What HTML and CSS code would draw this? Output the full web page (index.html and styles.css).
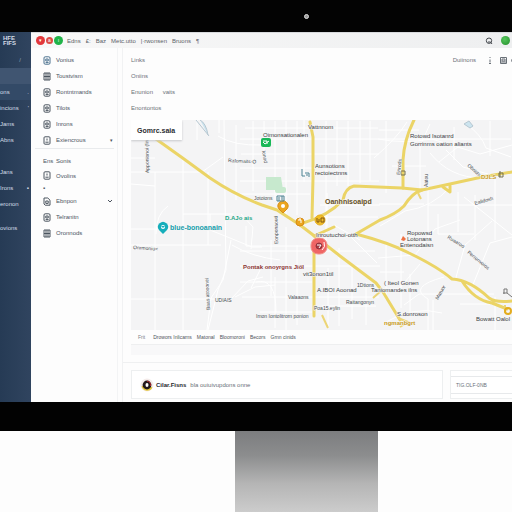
FILE: index.html
```html
<!DOCTYPE html>
<html lang="en">
<head>
<meta charset="utf-8">
<title>Map dashboard</title>
<link rel="stylesheet" href="styles.css">
</head>
<body>
<svg class="defs" aria-hidden="true">
  <symbol id="doc" viewBox="0 0 8 9"><rect x="1" y=".8" width="6" height="7.4" rx="1.2"/><path d="M2.8 3h2.4v2H2.8zM2.6 6.6h3"/></symbol>
  <symbol id="person" viewBox="0 0 8 9"><rect x="1" y=".8" width="6" height="7.4" rx="1"/><path d="M4 2.5v2M2.4 6.2h3.2"/></symbol>
  <symbol id="note" viewBox="0 0 8 9"><path d="M1 1h3.8L7 3.2v5H2.2L1 7zM2.8 4h2.4v2.4H2.8z"/></symbol>
  <symbol id="grid" viewBox="0 0 8 9"><path d="M1 1h6v7H1zM1 4.5h6M3 1v7M5 1v7"/></symbol>
</svg>
<div class="monitor">
  <div class="bezel-top"><span class="camera"></span></div>
  <div class="screen">
    <nav class="rail">
      <div class="logo">HFE<br>FIFS</div>
      <div class="rail-search"><span>/</span></div>
      <a class="lit" href="#">ons<i>.</i></a>
      <a href="#">incions<i>'</i></a>
      <a href="#">Jams</a>
      <a href="#">Abns</a>
      <a class="spaced" href="#">Jans</a>
      <a href="#">Irons<i>▪</i></a>
      <a href="#">eronon</a>
      <a class="late" href="#">ovions</a>
    </nav>
    <div class="window">
      <header class="toolbar">
        <span class="dot red">▾</span><span class="dot red small">a</span><span class="dot green">ı</span>
        <div class="menus"><a href="#">Edns</a><a href="#">£:</a><a href="#">Baz</a><a href="#">Metc.utto</a><a href="#">|·rwonsen</a><a href="#">Bruons</a><a href="#">¶</a></div>
        <button class="search" aria-label="Search"><svg viewBox="0 0 8 8"><circle cx="4" cy="3.7" r="2.7"/><path d="M3 5h2.5L7 7"/></svg></button>
        <span class="dot leaf"></span>
      </header>
      <div class="content">
        <aside class="side">
          <div class="group">
            <a href="#"><svg class="blue"><use href="#doc"/></svg>Vonius</a>
            <a href="#"><svg><use href="#grid"/></svg>Toustvism</a>
            <a href="#"><svg><use href="#doc"/></svg>Rontntmands</a>
            <a href="#"><svg><use href="#doc"/></svg>Tilots</a>
            <a href="#"><svg><use href="#doc"/></svg>Inrons</a>
            <a href="#"><svg><use href="#person"/></svg>Exiencrous<b class="filled">▾</b></a>
          </div>
          <div class="group tight">
            <a href="#"><em>Ens</em>Sonis</a>
            <a href="#"><svg><use href="#person"/></svg>Ovolins</a>
            <span class="bullet">▪</span>
          </div>
          <div class="group last">
            <a href="#"><svg><use href="#note"/></svg>Ebnpon<b><svg viewBox="0 0 6 4"><path d="M1 1l2 2 2-2"/></svg></b></a>
            <a href="#"><svg><use href="#doc"/></svg>Telranitn</a>
            <a href="#"><svg><use href="#grid"/></svg>Oronnods</a>
          </div>
        </aside>
        <main>
          <section class="page">
            <div class="heading">
              <div class="crumbs"><p>Links</p><p>Oniins</p><p>Enunion <span>vaits</span></p><p>Enontontos</p></div>
              <div class="actions"><span>Duiinons</span><svg viewBox="0 0 24 9"><path d="M2 1v1M2 3.5v3M1 7.5h2M12.5 1.5h6v6h-6zM14 3h3v2h-3zM13 6h5M25 1.5q-3 3 0 6"/></svg></div>
            </div>
            <div class="map">
              <div class="map-title">Gomrc.saia</div>
              <svg viewBox="131 120 381 210" role="img" aria-label="City map">
                <g class="street">
                  <path d="M131 158h24M131 172h71l21-15M131 184l24 2M155 172v158M183 158v172M208 172v73M236 125v75M131 229h52M131 245h90M131 299h100l17-18 15-4M210 214v16l20 8 22 9h10M218 136q16 10 44 9M224 120l2 150-8 20-10 40M231 240l-8 40-12 18-4 32M232 245q20 12 48 15M260 270l-9 18M256 282q20-5 20 30M183 214h50M168 206q-12 8-12 28"/>
                  <path d="M241 154h138M240 139h271M245 128h133M240 168h75M240 181h139M240 194h70M253 121v70M264 121v35M275 121v80M286 121v94M297 121v94M326 121v120M337 121v65M348 121v65M360 121v62M370 121v60M320 205h60M321 217h57M327 193v34M246 226v20h75M240 251h135M240 266h140M240 282h72M242 297h137M271 240v56M286 227v103M297 245v80M328 268v60M339 248v78M352 265v54M366 282v43M322 306h54M260 312h52M275 277v51"/>
                  <path d="M378 139q25 5 54 0l48 15 32-9M374 158q23-20 33-36M386 121v72M430 124l-10 22v44M430 153q20 25 52 25M446 150l17 17 25 7M428 176v65M450 187q-17 20-45 24l-25 15M466 124q15 10 20 24l25 9M464 197l48 38M458 192v40M475 195v45M495 178v62M379 204h45M428 205h84M378 258l37-3 20-26 25-9M420 264l-21 25h-24M444 277q-37 10-16 22v31M455 281l10-36 27-24M472 287l18-44 22-6M404 305l15-11h75M433 300v30M410 274v40M495 297v33M384 323q30-18 58-10"/>
                  <path d="M379 130h40M454 127v33M490 121v35M392 166h34M439 162l20-16M438 214v20h36M386 242v57M401 234v74M380 272h24M460 304h30M334 225l26 15M351 237l26 26M235 297l20-10 20-2M241 214l12 13-2 22M197 120v20M219 120v13M304 120v62"/>
                </g>
                <g class="green-area"><path d="M266 177h15l2 13h-17z"/><rect x="275" y="187" width="11" height="6" rx="2"/></g>
                <path class="water" d="M196 120l13 16M200 120q6 3 8 15M464 124l5-3 4 5-3 2z"/>
                <g class="main-road">
                  <path d="M156 139L184 159L210 178Q235 195 262 205L277 210L300 225Q320 240 340 256L376 283L383 292L400 320"/>
                  <path d="M310 122L313 137V178L312 218M314 250V316"/>
                  <path d="M343 200Q345 188 354 186L402 188L422 190L450 184L482 177L512 172M303 223Q328 216 343 200"/>
                  <path d="M414 120Q404 140 403 160V188M422 190Q412 193 404 206Q396 214 380 220L356 234"/>
                  <path d="M356 234Q390 243 409 253Q438 267 452 279Q470 280 489 298Q496 303 512 301M462 281Q474 300 492 303L507 309M443 187l7 5v-6M314 236l20-9"/>
                </g>
                <g class="small-roads"><path d="M322 315l6 13M382 290l-9 8M418 193l3 6M398 318l10 4-8 5M505 305v8"/></g>
                <g class="pins">
                  <rect class="emerald" x="261" y="138" width="10" height="9" rx="2"/><path class="mark" d="M263 142l2 2 4-3M263 141h4v3"/>
                  <path class="teal" d="M163 234l-4-4a5 5 0 1 1 8 0z"/><circle class="hole" cx="163" cy="227" r="2"/><path class="teal" d="M161 226h4l-2 2z"/>
                  <path class="amber" d="M283 213l-4-4a5 5 0 1 1 8 0z"/><circle class="hole" cx="283" cy="206" r="2"/>
                  <circle class="amber" cx="300" cy="222" r="4"/><path class="mark" d="M298 220h3v3M300 218v2"/>
                  <circle class="gold" cx="320" cy="220" r="5"/><path class="brown" d="M317 218v4h2v-3M321 218h3v4h-3z"/>
                  <rect class="coral" x="311" y="238" width="16" height="16" rx="7"/><circle class="core" cx="319" cy="246" r="3"/><path class="mark" d="M317 245h4l-2 3M324 242q2 5-2 8"/>
                  <path class="steel" d="M302 169v7h3M305 173h4v4M306 175h2M277 196h7v5h-7zM279 197v4M282 196v4"/>
                  <path class="bronze" d="M401 171h4v4h-4zM503 173h-4v4h4zM500 171v6"/>
                  <path class="orange" d="M401 240l2-4 3 3-2 2z"/>
                  <circle class="ring" cx="508" cy="311" r="3"/><path class="sign" d="M504 294v-5h3v4h-4M507 293l5 4"/>
                </g>
                <g class="labels">
                  <text x="308" y="129">Vattnnom</text><text x="263" y="137">Oimonsationalen</text>
                  <text x="315" y="168">Aunsotions</text><text x="315" y="175">rectoiectnns</text>
                  <text x="410" y="138">Rotowd Isotanrd</text><text x="410" y="146">Gorrinms oation aliants</text>
                  <text x="316" y="237">Inroutuchoi-otth</text>
                  <text x="303" y="276">vit3onon1til</text><text x="317" y="292">A.IBOI Aoonad</text>
                  <text x="384" y="285">( Iteol Gonen</text><text x="371" y="292">Taniomandes ilns</text>
                  <text x="407" y="235">Ropowsd</text><text x="407" y="241">Lotonans</text><text x="400" y="247">Entenodaisn</text>
                  <text x="397" y="316">S.donroson</text><text x="476" y="321">Bowatt Oalol</text>
                </g>
                <g class="labels minor">
                  <text x="228" y="162" transform="rotate(3 228 162)">Ratomaits-O</text><text x="254" y="200">Jotoions</text>
                  <text x="288" y="299">Valaaons</text><text x="256" y="318">Imon Iontolitrorn ponion</text><text x="314" y="310">Poa15.eylin</text>
                  <text x="346" y="304">Raitangonyn</text><text x="357" y="287">1Dtions</text><text x="215" y="302">UDIAIS</text>
                  <text x="133" y="249" transform="rotate(4 133 249)">Onrmoniu&lt;</text>
                  <text transform="translate(149 173) rotate(-91)">Apponionoi (fin)</text>
                  <text transform="translate(210 310) rotate(-93)">Baas atooonel</text>
                  <text transform="translate(278 244) rotate(-91)">Eonponaoud</text>
                  <text transform="translate(262 151) rotate(80)">Ionod</text>
                  <text transform="translate(400 175) rotate(-84)">Enrods</text>
                  <text transform="translate(428 187) rotate(-90)">Aatou</text>
                  <text transform="translate(467 166) rotate(42)">Obnids</text>
                  <text transform="translate(475 205) rotate(-16)">Ealidoxh</text>
                  <text transform="translate(447 238) rotate(32)">Ruaaroo</text>
                  <text transform="translate(467 253) rotate(39)">Perronvoios</text>
                  <text transform="translate(438 300) rotate(-60)">Matuor</text>
                </g>
                <g class="labels named">
                  <text class="t-teal" x="170" y="230">blue-bonoanain</text><text class="t-green" x="225" y="220">D.AJo ais</text>
                  <text class="t-brown" x="325" y="204">Oanhnisoaipd</text><text class="t-red" x="243" y="269">Pontak onoyrgns Jiől</text>
                  <text class="t-gold" x="384" y="325">ngmanbgrt</text><text class="t-gold" x="481" y="179">DJLS</text>
                </g>
              </svg>
            </div>
            <nav class="tabs"><a href="#">Frit</a><a href="#">Drowors Inlicarns</a><a href="#">Matonal</a><a href="#">Bloomoroni</a><a href="#">Becors</a><a href="#">Grnn cinids</a></nav>
          </section>
          <div class="footer">
            <div class="card"><svg viewBox="0 0 14 14"><circle class="halo" cx="7" cy="7" r="6.5"/><path class="gold-ring" d="M2.5 8a4.8 4.8 0 0 0 9 1"/><circle class="disc" cx="7" cy="7" r="4.4"/><path class="red-ring" d="M7 3.2a3.7 3.7 0 0 1 3.5 4.8"/><ellipse class="eye" cx="7" cy="7" rx="1.5" ry="2"/></svg><strong>Cilar.Fisns</strong><span>bla ouiuivupdons onne</span></div>
            <div class="card date"><span>TIG.OLF-0NB</span></div>
          </div>
        </main>
      </div>
    </div>
  </div>
  <div class="bezel-bottom"></div>
  <div class="base"><div class="stand"></div></div>
</div>
</body>
</html>
```
FILE: styles.css
```css
* { box-sizing: border-box; }
body { margin: 0; background: #fdfdfd; color: #697078; font: 6px/16px "Liberation Sans", Arial, sans-serif; overflow: hidden; }
a { color: inherit; text-decoration: none; }
p { margin: 0; }
svg { display: block; fill: none; stroke: currentColor; }
.defs { position: absolute; width: 0; height: 0; }
.monitor { min-height: 100vh; display: flex; flex-direction: column; }
.bezel-top { height: 32px; background: #030303; display: flex; justify-content: center; align-items: center; padding-left: 101px; }
.camera { width: 5px; height: 5px; border-radius: 50%; background: #999; border: 1px solid #ddd; }
.bezel-bottom { height: 29px; background: #020202; }
.base { flex: 1; display: flex; justify-content: center; padding-left: 101px; }
.stand { width: 143px; background: linear-gradient(#7c7d7f, #8c8d8e 30%, #b5b5b5 65%, #cccccc); }

.screen { display: flex; min-height: 370px; }
.rail { flex: 0 0 31px; background: linear-gradient(90deg, #263b55, #30445f); color: #d4dce6; overflow: hidden; }
.rail a { display: flex; justify-content: space-between; height: 16px; padding-right: 2px; white-space: nowrap; }
.rail i { font-style: normal; }
.logo { height: 20px; padding: 4px 0 0 3px; font-size: 6px; line-height: 5px; font-weight: bold; }
.rail-search { height: 32px; border-bottom: 16px solid #405571; text-align: right; padding-right: 10px; color: #91a1b3; }
.rail .lit { background: #334a67; }
.rail .spaced { margin-top: 16px; }
.rail .late { margin-top: 8px; }

.window { flex: 1; min-width: 0; display: flex; flex-direction: column; background: #fdfdfd; }
.toolbar { height: 16px; display: flex; align-items: center; padding: 0 2px 0 5px; background: linear-gradient(90deg, #f8f8f8, #eeeff0); border-top: 1px solid #d8dadd; }
.dot { width: 9px; height: 9px; flex: none; border-radius: 50%; color: #fff; font-size: 5px; line-height: 9px; text-align: center; }
.red { background: #e2383b; }
.small { width: 7px; height: 7px; margin: 0 1px; line-height: 6px; background: #dc4c45; }
.green { background: #20b348; }
.leaf { background: radial-gradient(circle at 40% 35%, #55c65c, #248e2c); }
.menus { flex: 1; display: flex; gap: 5px; padding-left: 4px; white-space: nowrap; color: #5c6268; }
.search { padding: 0; border: 0; background: none; color: #45494e; margin-right: 8px; }
.search svg { width: 8px; height: 8px; }

.content { flex: 1; display: flex; }
.side { flex: 0 0 87px; padding: 4px 3px 0 4px; border-right: 1px solid #f3f4f5; color: #4b545f; }
.group { border-bottom: 1px solid #e9ebed; }
.group a { display: flex; align-items: center; height: 16px; padding: 0 1px 0 8px; gap: 5px; }
.group a > svg { width: 8px; height: 9px; }
.group .blue { color: #4a718e; }
.group b { margin-left: auto; font-weight: normal; }
.group b svg { width: 6px; height: 4px; }
.group em { font-style: normal; width: 8px; white-space: nowrap; }
.group .filled { font-size: 5px; }
.tight, .last { border: 0; }
.tight { padding-top: 4px; }
.tight a { height: 15px; }
.tight .bullet { height: 10px; }
.bullet { display: block; padding-left: 8px; line-height: 10px; }

main { flex: 1; min-width: 0; margin-left: 4px; border-left: 1px solid #f1f2f3; }
.page { padding: 4px 0 0 8px; border-bottom: 1px solid #eff0f1; }
.heading { display: flex; justify-content: space-between; height: 68px; color: #6a7178; }
.crumbs span { margin-left: 8px; }
.actions { display: flex; align-items: center; height: 16px; gap: 12px; }
.actions svg { width: 24px; height: 9px; overflow: hidden; stroke-width: 1; }
.map { position: relative; background: #f4f4f5; overflow: hidden; }
.map > svg { width: 100%; height: auto; }
.map-title { position: absolute; top: 0; left: 0; width: 51px; height: 20px; padding-left: 6px; line-height: 21px; font-weight: bold; font-size: 7px; background: #fff; color: #2b2e32; box-shadow: 0 1px 2px #c6c8cb; white-space: nowrap; }
.street { stroke: #fff; stroke-width: 1; }
.main-road { stroke: #ebd466; stroke-width: 3; stroke-linecap: round; stroke-linejoin: round; }
.small-roads { stroke: #ecd576; stroke-width: 2; }
.green-area { fill: #c7e9ce; stroke: none; }
.water { fill: #cce4ef; stroke: #b6c7d1; }
.labels { stroke: #f7f7f7; stroke-width: 1; paint-order: stroke; fill: #363c42; font-size: 6px; }
.minor { fill: #454b51; font-size: 5px; }
.named { font-weight: bold; }
.t-teal { fill: #159dab; font-size: 7px; }
.t-green { fill: #20a586; }
.t-brown { fill: #655025; font-size: 7px; }
.t-red { fill: #8b3434; }
.t-gold { fill: #c89b1d; }
.pins { stroke-width: 1; }
.emerald { fill: #19b858; stroke: none; }
.teal { fill: #15aebb; stroke: none; }
.amber { fill: #eba51e; stroke: #d88d16; }
.gold { fill: #f0bd27; stroke: #e5ad22; }
.coral { fill: #ef6665; stroke: #f1928b; }
.core { fill: #a9363e; stroke: #8f353d; }
.hole { fill: #fff; stroke: none; }
.mark { stroke: #fff; }
.brown { stroke: #805616; }
.steel { stroke: #4f8494; }
.bronze { stroke: #75704f; }
.orange { fill: #ee7143; stroke: none; }
.ring { stroke: #e3ac1f; stroke-width: 2; }
.sign { stroke: #777; }
.tabs { display: flex; gap: 5px; height: 15px; padding-left: 7px; font-size: 5px; line-height: 15px; white-space: nowrap; color: #4d5359; border-bottom: 1px solid #eeeff0; }
.tabs a:first-child { margin-right: 3px; color: #7d8389; }
.page::after { content: ""; display: block; height: 10px; margin-bottom: 7px; background: #f8f8f9; }
.footer { display: flex; gap: 7px; padding: 7px 0 3px 8px; }
.card { flex: 1; display: flex; align-items: center; gap: 2px; height: 29px; padding-left: 8px; border: 1px solid #edeff0; background: #fff; white-space: nowrap; }
.card > svg { width: 14px; height: 14px; }
.card strong { color: #25282c; margin-right: 2px; }
.date { flex: 0 0 62px; padding: 0; border-right: 0; }
.date span { flex: 1; padding-left: 5px; font-size: 5px; border: solid #e7e9eb; border-width: 1px 0; }
.halo { fill: #f4ecea; stroke: none; }
.gold-ring { stroke: #e3c53a; stroke-width: 2; }
.disc { fill: #22191a; stroke: none; }
.red-ring { stroke: #b62b31; stroke-width: 1; }
.eye { fill: #fff; stroke: none; }
```
